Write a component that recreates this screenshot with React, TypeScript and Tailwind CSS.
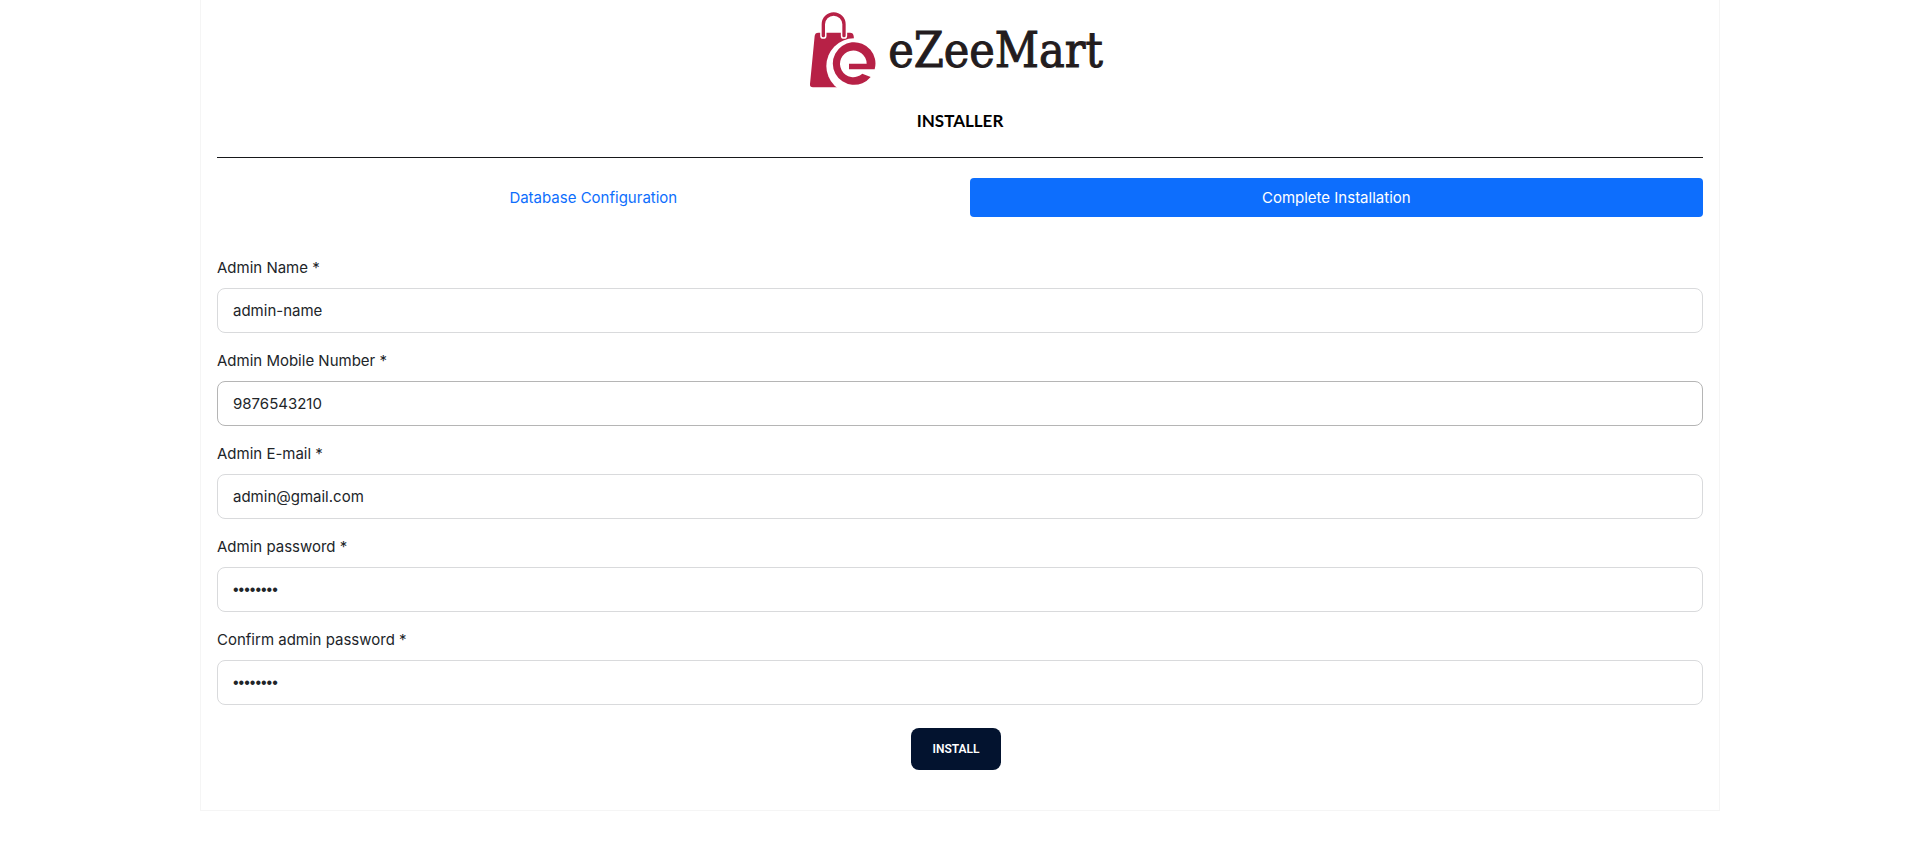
type Field = {
  id: string;
  label: string;
  type: string;
  value: string;
  active?: boolean;
};

const fields: Field[] = [
  { id: "admin-name", label: "Admin Name *", type: "text", value: "admin-name" },
  { id: "admin-mobile", label: "Admin Mobile Number *", type: "text", value: "9876543210", active: true },
  { id: "admin-email", label: "Admin E-mail *", type: "email", value: "admin@gmail.com" },
  { id: "admin-password", label: "Admin password *", type: "password", value: "12345678" },
  { id: "admin-password-confirm", label: "Confirm admin password *", type: "password", value: "12345678" },
];

function BagMark() {
  return (
    <svg viewBox="27 17 201 237" className="h-[79px] w-[67px] shrink-0" aria-hidden="true">
      <path
        d="M55 82H150Q160 82 161 92L176 236Q177 246 167 246H39Q29 246 30 236L44 92Q45 82 55 82Z"
        fill="#b72146"
      />
      <path d="M70 91V57a31 31 0 0 1 62 0V91" fill="none" stroke="#fff" strokeWidth="19" strokeLinecap="round" />
      <path d="M70 91V57a31 31 0 0 1 62 0V91" fill="none" stroke="#b72146" strokeWidth="10" strokeLinecap="round" />
      <circle cx="162" cy="182" r="83" fill="#fff" />
      <path d="M128 232L144 262H230V232Z" fill="#fff" />
      <path
        d="M224 192H147V175H200A40 40 0 1 0 187 205L212 215A64 64 0 1 1 224 192Z"
        fill="#b72146"
      />
    </svg>
  );
}

function Logo() {
  return (
    <div className="mr-2 flex h-[100px] items-center justify-center gap-3">
      <BagMark />
      <span className="font-['DejaVu_Serif_Condensed','DejaVu_Serif',serif] text-[48px] leading-[48px] text-[#231c1e] [-webkit-text-stroke:1px_#231c1e]">
        eZeeMart
      </span>
    </div>
  );
}

function FormField({ field }: { field: Field }) {
  const font = field.type === "password" ? "font-['Liberation_Sans',sans-serif] text-base" : "";
  const border = field.active ? "border-[#b5b5b5]" : "border-[#d9dadc]";
  return (
    <div className="flex flex-col gap-2">
      <label htmlFor={field.id} className="leading-6">
        {field.label}
      </label>
      <input
        id={field.id}
        type={field.type}
        defaultValue={field.value}
        className={`h-[45px] w-full rounded-lg border bg-white px-[15px] outline-none ${border} ${font}`}
      />
    </div>
  );
}

export default function App() {
  return (
    <div className="min-h-screen bg-white pl-0.5 font-['Inter','Open_Sans',sans-serif] text-[15px] text-[#212529]">
      <main className="mx-auto max-w-[1520px] border border-t-0 border-[#f5f5f5] px-4 pb-10">
        <header className="border-b border-[#17181a] pb-6">
          <Logo />
          <h1 className="mt-[9px] text-center font-['Lato','Open_Sans',sans-serif] text-[17px] leading-6 font-bold text-black">
            INSTALLER
          </h1>
        </header>
        <nav className="mt-5 flex text-center leading-[23px]">
          <a href="#database" className="flex-auto rounded px-4 py-2 text-[#0d6efd]">
            Database Configuration
          </a>
          <a href="#complete" aria-current="page" className="flex-auto rounded bg-[#0d6efd] px-4 py-2 text-white">
            Complete Installation
          </a>
        </nav>
        <form className="mt-[39px]" onSubmit={(event) => event.preventDefault()}>
          <div className="flex flex-col gap-4">
            {fields.map((field) => (
              <FormField key={field.id} field={field} />
            ))}
          </div>
          <div className="mt-[23px] mr-2 flex justify-center">
            <button
              type="submit"
              className="h-[42px] w-[90px] rounded-lg bg-[#03132f] font-['Roboto','Inter',sans-serif] text-xs font-semibold text-white"
            >
              INSTALL
            </button>
          </div>
        </form>
      </main>
    </div>
  );
}
